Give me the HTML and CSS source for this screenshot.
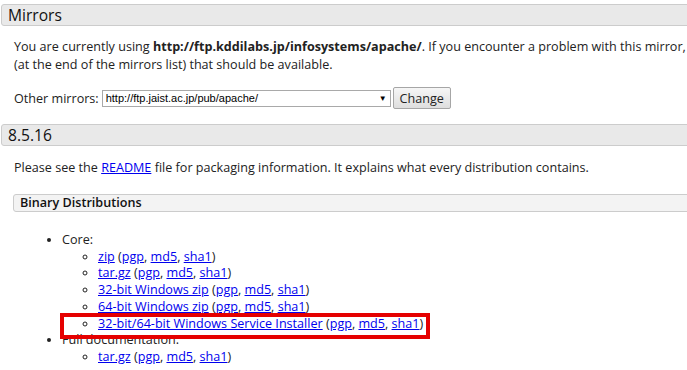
FILE: index.html
```html
<!DOCTYPE html>
<html lang="en">
<head>
    <meta charset="UTF-8">
    <title>Apache Tomcat - Download</title>
    <link rel="stylesheet" href="styles.css">
</head>
<body>

<!-- Mirrors -->
<h3 class="section-title">Mirrors</h3>
<div class="section-body">
    <p class="mirror-note">You are currently using <b>http://ftp.kddilabs.jp/infosystems/apache/</b>. If you encounter a problem with this mirror, please select another mirror. If all mirrors are failing, there are <i>backup</i> mirrors<br>(at the end of the mirrors list) that should be available.</p>
    <form class="mirror-form">
        Other mirrors:
        <span class="select-wrap">
            <select class="mirror-select">
                <option>http://ftp.jaist.ac.jp/pub/apache/</option>
            </select>
        </span>
        <button type="button" class="change-btn">Change</button>
    </form>
</div>

<!-- Version -->
<h3 class="section-title">8.5.16</h3>
<div class="section-body">
    <p class="readme-note">Please see the <a href="#">README</a> file for packaging information. It explains what every distribution contains.</p>

    <h4 class="sub-title">Binary Distributions</h4>
    <ul class="dist-list">
        <li>Core:
            <ul>
                <li><a href="#">zip</a> (<a href="#">pgp</a>, <a href="#">md5</a>, <a href="#">sha1</a>)</li>
                <li><a href="#">tar.gz</a> (<a href="#">pgp</a>, <a href="#">md5</a>, <a href="#">sha1</a>)</li>
                <li><a href="#">32-bit Windows zip</a> (<a href="#">pgp</a>, <a href="#">md5</a>, <a href="#">sha1</a>)</li>
                <li><a href="#">64-bit Windows zip</a> (<a href="#">pgp</a>, <a href="#">md5</a>, <a href="#">sha1</a>)</li>
                <li class="marked"><a href="#">32-bit/64-bit Windows Service Installer</a> (<a href="#">pgp</a>, <a href="#">md5</a>, <a href="#">sha1</a>)</li>
            </ul>
        </li>
        <li>Full documentation:
            <ul>
                <li><a href="#">tar.gz</a> (<a href="#">pgp</a>, <a href="#">md5</a>, <a href="#">sha1</a>)</li>
            </ul>
        </li>
    </ul>
</div>

</body>
</html>
```

FILE: styles.css
```css
body {
    margin: 0;
    font-family: "Open Sans", sans-serif;
    font-size: 12.6px;
    color: #222;
    overflow: hidden;
}
a {
    color: #00e;
}
.section-title {
    margin: 4px -20px 0 1px;
    padding: 1px 6px;
    font-size: 15.6px;
    font-weight: normal;
    line-height: 18px;
    color: #111;
    background-color: #e9e9e9;
    border: 1px solid #ccc;
    border-radius: 3px;
}
.section-body {
    padding-left: 13px;
}
.mirror-note {
    margin: 12px 0 0 1px;
    line-height: 18px;
    white-space: nowrap;
}
.mirror-form {
    display: flex;
    align-items: center;
    gap: 3px;
    margin: 13px 0 15px 1px;
    height: 22px;
}
.select-wrap {
    position: relative;
    display: inline-block;
    margin-right: -1px;
}
.select-wrap::after {
    content: "\25BC";
    position: absolute;
    right: 4px;
    top: 3px;
    font-size: 8px;
    color: #000;
    pointer-events: none;
}
.mirror-select {
    appearance: none;
    -webkit-appearance: none;
    width: 289px;
    height: 17px;
    margin: 0;
    padding: 0 3px;
    font-family: "Liberation Sans", Arial, sans-serif;
    font-size: 11px;
    color: #000;
    background-color: #fff;
    border: 1px solid #a9a9a9;
    border-radius: 0;
}
.change-btn {
    height: 22px;
    width: 58px;
    padding: 0;
    font-family: "Open Sans", sans-serif;
    font-size: 12.6px;
    color: #222;
    background: linear-gradient(#f6f6f6, #dedede);
    border: 1px solid #a6a6a6;
    border-radius: 2px;
}
.readme-note {
    margin: 13px 0 17px 1px;
    line-height: 18px;
}
.sub-title {
    margin: 0 -20px 0 0;
    padding: 0 6px;
    font-size: 12.6px;
    font-weight: 600;
    line-height: 16px;
    color: #111;
    background-color: #f3f3f3;
    border: 1px solid #ccc;
    border-radius: 3px;
}
.dist-list {
    margin: 20px 0 0;
    padding-left: 49px;
    line-height: 16.7px;
}
.dist-list ul {
    margin: 0;
    padding-left: 36px;
    list-style-type: circle;
}
.marked {
    position: relative;
}
.marked::after {
    content: "";
    position: absolute;
    left: -38px;
    top: -3px;
    width: 362px;
    height: 18px;
    border: 4px solid #e50000;
    pointer-events: none;
}
```
